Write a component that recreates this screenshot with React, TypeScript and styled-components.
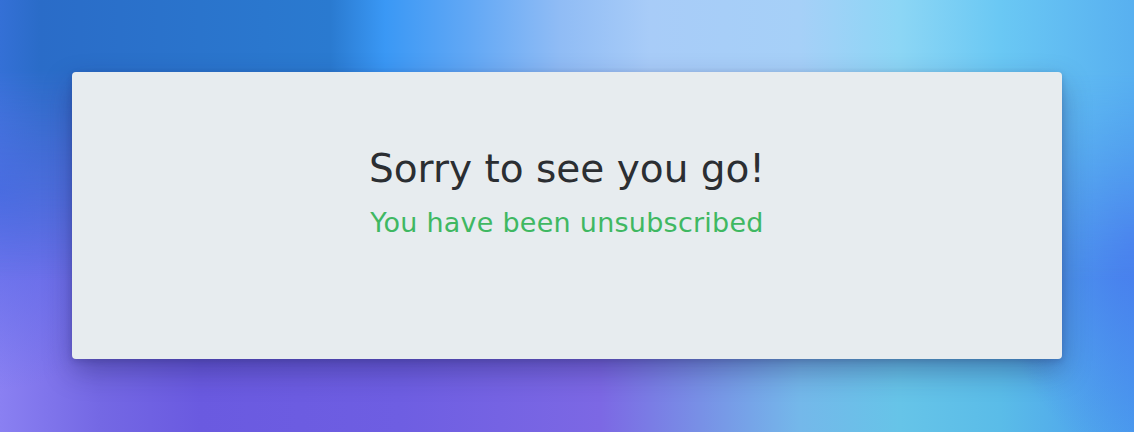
import React from "react";
import styled, { createGlobalStyle } from "styled-components";

const GlobalStyle = createGlobalStyle`
  html, body {
    margin: 0;
    padding: 0;
    width: 100%;
    height: 100%;
  }
  body {
    font-family: "DejaVu Sans", "Open Sans", sans-serif;
  }
  #root {
    min-height: 100%;
  }
`;

const Page = styled.main`
  position: relative;
  box-sizing: border-box;
  width: 100%;
  min-height: 432px;
  padding: 72px;
  display: flex;
  align-items: stretch;
  overflow: hidden;
  background-color: #6a78e6;
  background-image:
    radial-gradient(ellipse 140px 220px at 1134px 240px, rgba(72, 124, 238, 1) 0%, rgba(72, 124, 238, 0) 100%),
    radial-gradient(ellipse 160px 200px at 0px 190px, rgba(88, 106, 232, 1) 0%, rgba(88, 106, 232, 0) 100%),
    linear-gradient(90deg,
      #8a80f2 0px,
      #7468e4 100px,
      #6a5ae0 200px,
      #6e5ee2 400px,
      #7c68e4 600px,
      #7890e6 700px,
      #74b8ea 800px,
      #66c4e8 900px,
      #5abce8 1000px,
      #4a9cee 1134px);

  &::before {
    content: "";
    position: absolute;
    inset: 0;
    pointer-events: none;
    background: linear-gradient(90deg,
      #3470d6 0px,
      #2a6cc8 40px,
      #2a74cc 200px,
      #2a7ad0 330px,
      #3a98f5 385px,
      #62a8f5 470px,
      #90bcf5 560px,
      #a8ccf8 650px,
      #a6d0f8 800px,
      #8cd6f5 900px,
      #6ac8f4 1000px,
      #58b0f0 1134px);
    -webkit-mask-image: linear-gradient(to bottom, #000 0px, #000 70px, rgba(0, 0, 0, 0.5) 170px, transparent 280px);
    mask-image: linear-gradient(to bottom, #000 0px, #000 70px, rgba(0, 0, 0, 0.5) 170px, transparent 280px);
  }
`;

const Card = styled.section`
  position: relative;
  z-index: 1;
  flex: 1;
  box-sizing: border-box;
  height: 287px;
  padding-top: 74px;
  display: flex;
  flex-direction: column;
  align-items: center;
  background: #e7ecef;
  border-radius: 4px;
  box-shadow: 0 12px 28px rgba(30, 30, 90, 0.38), 0 2px 6px rgba(30, 30, 90, 0.2);
`;

const Title = styled.h1`
  margin: 0;
  font-family: "DejaVu Sans", "Open Sans", sans-serif;
  font-size: 39px;
  line-height: 1.2;
  font-weight: 400;
  color: #2b2e32;
`;

const Subtitle = styled.p`
  margin: 14px 0 0;
  font-family: "DejaVu Sans", "Open Sans", sans-serif;
  font-size: 27px;
  line-height: 1.2;
  font-weight: 400;
  color: #3fb862;
  letter-spacing: 0.25px;
`;

export default function App() {
  return (
    <>
      <GlobalStyle />
      <Page>
        <Card>
          <Title>Sorry to see you go!</Title>
          <Subtitle>You have been unsubscribed</Subtitle>
        </Card>
      </Page>
    </>
  );
}
